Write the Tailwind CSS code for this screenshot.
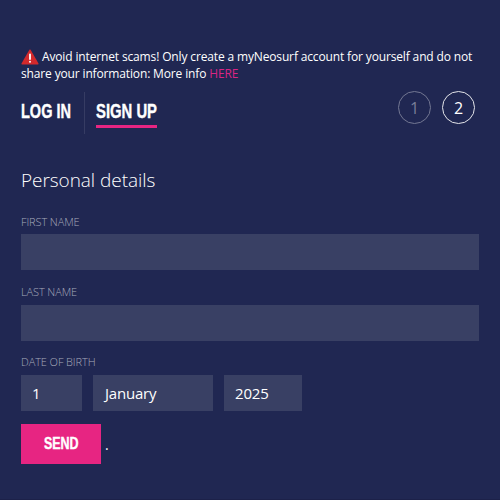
<!DOCTYPE html>
<html lang="en">

<head>
  <meta charset="UTF-8" />
  <meta name="viewport" content="width=device-width, initial-scale=1.0" />
  <script src="https://cdn.jsdelivr.net/npm/@tailwindcss/browser@4"></script>
  <title>myNeosurf - Sign up</title>
</head>

<body class="bg-[#202752] font-['Open_Sans',sans-serif] text-white">
  <main class="h-[500px] w-[500px] overflow-hidden border-b border-[#1c2149] px-[21px] pt-[48px]">
    <p class="text-[12px] font-medium leading-[17px] tracking-[-0.145px] whitespace-nowrap">
      <svg class="mr-[3px] inline-block h-[16px] w-[18px] align-[-4px]" viewBox="0 0 18 16">
        <path d="M8.400 .8Q9 0 9.600 .8L17.500 14.500Q17.800 15.500 16.800 15.500H1.200Q.2 15.500 .5 14.500Z" fill="#d3292c" />
        <path d="M9 5.500V10" stroke="#fff" stroke-width="1.800" stroke-linecap="round" />
        <circle cx="9" cy="12.700" r="1" fill="#fff" />
      </svg>Avoid internet scams! Only create a myNeosurf account for yourself and do not<br />
      share your information: More info <a href="#" class="font-normal text-[#d92584]">HERE</a>
    </p>

    <div class="mt-[10px] flex h-[42px] justify-between">
      <nav class="flex font-['Liberation_Sans',sans-serif] text-[20px] font-bold leading-[24px] [-webkit-text-stroke:0.4px_white]">
        <a href="#" class="w-[64px] border-r border-[#363c63] pt-[7px]">
          <span class="inline-block origin-left scale-x-[.725] whitespace-nowrap">LOG IN</span>
        </a>
        <a href="#" class="ml-[11px] mt-[7px] h-[29px] w-[61px] border-b-3 border-[#e72582]">
          <span class="inline-block origin-left scale-x-[.742] whitespace-nowrap">SIGN UP</span>
        </a>
      </nav>
      <div class="mr-[4px] mt-[-1px] flex gap-[11px] text-[16px]">
        <span class="flex size-[33px] items-center justify-center rounded-full border border-[#737792] text-[#7a7e98]">1</span>
        <span class="flex size-[33px] items-center justify-center rounded-full border border-[#e4e5ea] font-medium">2</span>
      </div>
    </div>

    <h1 class="mt-[32px] text-[19px] font-light leading-[28px] tracking-[-0.05px]">Personal details</h1>

    <form>
      <label class="mt-[20px] block text-[11px] font-light leading-[16px] tracking-[-0.1px] text-[#a6a9ba]">
        FIRST NAME
        <input type="text" class="mt-[4px] block h-[36px] w-[458px] bg-[#394064]" />
      </label>
      <label class="mt-[14px] block text-[11px] font-light leading-[16px] tracking-[-0.1px] text-[#a6a9ba]">
        LAST NAME
        <input type="text" class="mt-[5px] block h-[36px] w-[458px] bg-[#394064]" />
      </label>

      <p class="mt-[13px] text-[11px] font-light leading-[16px] tracking-[-0.1px] text-[#a6a9ba]">DATE OF BIRTH</p>
      <div class="mt-[5px] flex gap-[11px] text-[15px] leading-[36px] tracking-[-0.2px]">
        <div class="w-[61px] bg-[#394064] pl-[11px] font-medium">1</div>
        <div class="w-[120px] bg-[#394064] pl-[12px] font-medium">January</div>
        <div class="w-[78px] bg-[#394064] pl-[11px] font-medium">2025</div>
      </div>

      <div class="mt-[13px] flex items-center gap-[4px]">
        <button type="button" class="flex h-[40px] w-[80px] items-center justify-center bg-[#e72582] font-['Liberation_Sans',sans-serif] text-[16px] font-bold [-webkit-text-stroke:0.4px_white]">
          <span class="scale-x-[.78]">SEND</span>
        </button>
        <span class="text-[14px]">.</span>
      </div>
    </form>
  </main>
</body>

</html>
